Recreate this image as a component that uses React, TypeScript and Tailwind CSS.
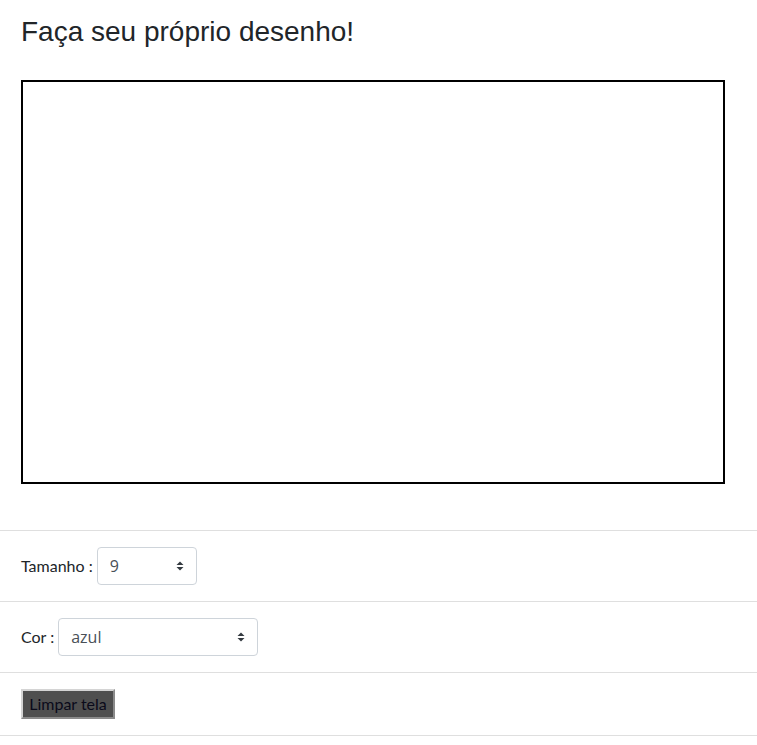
import React from "react";

function Arrows() {
  return (
    <svg
      width="8"
      height="10"
      viewBox="0 0 8 10"
      className="pointer-events-none absolute right-[13px] top-1/2 -translate-y-1/2"
    >
      <path d="M4 0.5 L7.5 4 L0.5 4 Z" fill="#343a40" />
      <path d="M4 9.5 L7.5 6 L0.5 6 Z" fill="#343a40" />
    </svg>
  );
}

function Select({ value, options, width }: { value: string; options: string[]; width: string }) {
  return (
    <div className={`relative ${width}`}>
      <select
        defaultValue={value}
        className="h-[38px] w-full appearance-none rounded-[4px] border border-[#ced4da] bg-white pl-[12px] pr-8 text-[16px] text-[#495057] outline-none"
        style={{ fontFamily: '"Open Sans", "Noto Sans", sans-serif' }}
      >
        {options.map((o) => (
          <option key={o} value={o}>
            {o}
          </option>
        ))}
      </select>
      <Arrows />
    </div>
  );
}

export default function App() {
  return (
    <div
      className="min-h-[745px] w-full bg-white text-[#212529]"
      style={{ fontFamily: 'Lato, "Open Sans", sans-serif' }}
    >
      <div className="px-[21px] pt-[15px]">
        <h3
          className="text-[28px] leading-[1.2] font-normal text-[#212529]"
          style={{ fontFamily: '"Liberation Sans", Arial, sans-serif' }}
        >
          Faça seu próprio desenho!
        </h3>
        <div className="mt-[31px] h-[404px] w-[704px] border-2 border-black bg-white" />
      </div>
      <div className="mt-[46px]">
        <div className="flex items-center gap-[4px] border-t border-[#dfdfdf] px-[21px] py-[16px]">
          <label className="text-[16px]">Tamanho :</label>
          <Select value="9" options={["1", "3", "5", "7", "9", "11", "13"]} width="w-[100px]" />
        </div>
        <div className="flex items-center gap-[4px] border-t border-[#dfdfdf] px-[21px] py-[16px]">
          <label className="text-[16px]">Cor :</label>
          <Select value="azul" options={["preto", "azul", "vermelho", "verde", "amarelo"]} width="w-[200px]" />
        </div>
        <div className="flex items-center border-y border-[#dfdfdf] px-[21px] py-[16px]">
          <button className="h-[30px] w-[94px] border-2 border-t-[#d4d4d4] border-l-[#d4d4d4] border-r-[#8a8a8a] border-b-[#8a8a8a] bg-[#4f4f4f] text-[16px] text-[#0a0a1a]">
            Limpar tela
          </button>
        </div>
      </div>
    </div>
  );
}
